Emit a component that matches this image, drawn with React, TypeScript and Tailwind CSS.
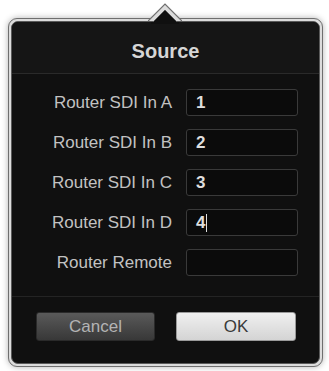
const rows = [
  { label: "Router SDI In A", value: "1" },
  { label: "Router SDI In B", value: "2" },
  { label: "Router SDI In C", value: "3" },
  { label: "Router SDI In D", value: "4", caret: true },
  { label: "Router Remote", value: "" },
];

export default function App() {
  return (
    <main
      className="h-[371px] w-[329px] overflow-hidden bg-white"
      style={{ fontFamily: '"Liberation Sans", Arial, sans-serif' }}
    >
      <div className="relative ml-[8px] mt-[18px] h-[349px] w-[315px]">
        {/* frame */}
        <div className="h-full w-full rounded-[9px] border border-[#6f6f6f] bg-[#dcdcdc] p-[2px] shadow-[0_0_6px_rgba(0,0,0,0.3)]">
          <div className="flex h-full flex-col overflow-hidden rounded-[7px] border border-[#5a5a5a] bg-[#101010]">
            <header className="flex h-[51px] shrink-0 items-center justify-center bg-[#151515] pt-[7px] text-[20px] font-bold text-[#d6d6d6]">
              Source
            </header>
            <div className="h-px bg-[#2a2a2a]" />

            <div className="grid grid-cols-[1fr_112px] items-center gap-x-[14px] gap-y-[13px] pt-[15px] pr-[21px]">
              {rows.map((r) => (
                <div key={r.label} className="contents">
                  <span className="text-right text-[17px] text-[#c2c2c2]">
                    {r.label}
                  </span>
                  <div className="flex h-[27px] items-center rounded-[3px] border border-[#3a3a3a] bg-[#0b0b0b] pl-[9px] text-[17px] font-bold text-[#dedede]">
                    {r.value}
                    {r.caret && (
                      <span className="ml-[1px] h-[18px] w-px bg-[#e0e0e0]" />
                    )}
                  </div>
                </div>
              ))}
            </div>

            <div className="mt-[20px] h-px bg-[#242424]" />

            <div className="flex gap-[21px] pt-[15px] pl-[24px]">
              <button className="h-[29px] w-[119px] rounded-[3px] border border-[#2a2a2a] bg-gradient-to-b from-[#5a5a5a] to-[#383838] text-[17px] text-[#b4b4b4]">
                Cancel
              </button>
              <button className="h-[29px] w-[120px] rounded-[3px] border border-[#9a9a9a] bg-gradient-to-b from-[#f0f0f0] to-[#d4d4d4] text-[17px] text-[#3a3a3a]">
                OK
              </button>
            </div>
          </div>
        </div>

        {/* pointer */}
        <svg
          className="absolute left-[140px] top-[-15px]"
          width="34"
          height="21"
          viewBox="0 0 34 21"
        >
          <path d="M0 18 L17 1 L34 18 Z" fill="#dcdcdc" />
          <path d="M0 18 L17 1 L34 18" fill="none" stroke="#6f6f6f" strokeWidth="1.2" />
          <path d="M4 20 L17 7 L30 20 Z" fill="#101010" />
          <path d="M4 20 L17 7 L30 20" fill="none" stroke="#5a5a5a" strokeWidth="1" />
          <rect x="3" y="19" width="28" height="2" fill="#101010" />
        </svg>
      </div>
    </main>
  );
}
